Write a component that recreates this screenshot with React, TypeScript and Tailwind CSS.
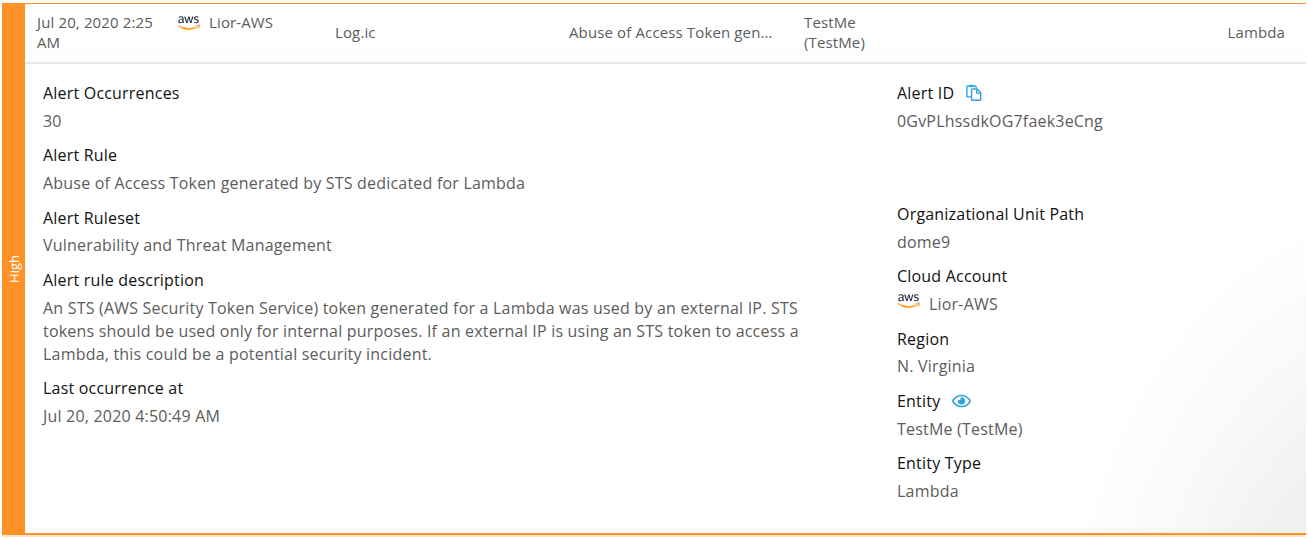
import React from 'react';
import { FaAws, FaRegEye } from 'react-icons/fa';

function AwsLogo({ className = '' }: { className?: string }) {
  return (
    <span className={`relative inline-block h-[18px] w-[23px] shrink-0 ${className}`}>
      <FaAws className="absolute inset-0 h-full w-full text-[#252f3e] [clip-path:inset(0_0_38%_0)]" />
      <FaAws className="absolute inset-0 h-full w-full text-[#ff9e1b] [clip-path:inset(62%_0_0_0)]" stroke="currentColor" strokeWidth="8" />
    </span>
  );
}

function PasteIcon() {
  return (
    <svg viewBox="0 0 16 17" className="h-[17px] w-4 text-[#2fa3df]" fill="none" stroke="currentColor" strokeWidth="1.4" strokeLinejoin="round">
      <path d="M5.4 12.9H1.7a.8.8 0 0 1-.8-.8V2.8a.8.8 0 0 1 .8-.8h7.6a.8.8 0 0 1 .8.8v1.8" />
      <path d="M3.2 2.8V1.6h1.3a1.1 1.1 0 0 1 2.1 0h1.3v1.2z" fill="currentColor" strokeWidth="0.5" />
      <path d="M6.4 5h4.7l3.6 3.6v6.8a.8.8 0 0 1-.8.8H6.4a.8.8 0 0 1-.8-.8V5.8a.8.8 0 0 1 .8-.8z" />
      <path d="M10.7 5.2v3.9h3.9" />
    </svg>
  );
}

function Field({ label, icon, children }: { label: string; icon?: React.ReactNode; children: React.ReactNode }) {
  return (
    <div className="mb-[11.1px]">
      <div className="flex h-[23px] items-center text-[#111]">
        <span>{label}</span>
        {icon && <span className="ml-3 flex">{icon}</span>}
      </div>
      <div className="mt-[5.3px] leading-[23px] text-[#5c5c5c]">{children}</div>
    </div>
  );
}

export default function App() {
  return (
    <div className="h-[539px] w-[1308px] overflow-hidden bg-white pt-[3px] pl-[2px] font-['Open_Sans',sans-serif]">
      <div className="flex h-[532px] w-[1304px]">
        <div className="flex w-[23px] shrink-0 items-center justify-center bg-[#ff9227] text-white">
          <span className="rotate-180 text-[13px] leading-[18px] [writing-mode:vertical-rl]">High</span>
        </div>
        <div className="flex min-w-0 flex-1 flex-col border-t border-b-2 border-[#ff9227]">
          <div className="flex h-[60px] shrink-0 border-b-2 border-[#e6e6e6] bg-linear-to-b from-white from-70% to-[#fcfcfc] text-[15px] leading-[20.4px] tracking-[0.13px] text-[#5c5c5c]">
            <div className="w-[141px] pt-[8px] pr-3 pl-[12px]">Jul 20, 2020 2:25 AM</div>
            <div className="flex w-[169px] items-start pt-[8px] pl-[11px]">
              <AwsLogo className="mt-[2px] mr-[9px]" />
              <span>Lior-AWS</span>
            </div>
            <div className="w-[234px] pt-[18px]">Log.ic</div>
            <div className="w-[234px] pt-[18px] whitespace-nowrap">Abuse of Access Token gen...</div>
            <div className="w-[100px] pt-[8px] pl-px">TestMe (TestMe)</div>
            <div className="ml-auto pt-[18px] pr-[21px]">Lambda</div>
          </div>
          <div className="flex flex-1 bg-[radial-gradient(ellipse_370px_500px_at_1400px_627px,#eff1f1_50%,#f8f9f9_75%,#ffffff_100%)] pt-[17.4px] pl-[18px] text-[16px] tracking-[0.2px]">
            <div className="w-[854px]">
              <Field label="Alert Occurrences">30</Field>
              <Field label="Alert Rule">Abuse of Access Token generated by STS dedicated for Lambda</Field>
              <Field label="Alert Ruleset">Vulnerability and Threat Management</Field>
              <Field label="Alert rule description">
                <div className="w-[775px]">
                  An STS (AWS Security Token Service) token generated for a Lambda was used by an external IP. STS<br />
                  tokens should be used only for internal purposes. If an external IP is using an STS token to access a<br />
                  Lambda, this could be a potential security incident.
                </div>
              </Field>
              <Field label="Last occurrence at">Jul 20, 2020 4:50:49 AM</Field>
            </div>
            <div>
              <div className="h-[121px]">
                <Field label="Alert ID" icon={<PasteIcon />}>0GvPLhssdkOG7faek3eCng</Field>
              </div>
              <Field label="Organizational Unit Path">dome9</Field>
              <Field label="Cloud Account">
                <div className="flex items-start">
                  <AwsLogo className="mt-[-1px] mr-[9px]" />
                  <span>Lior-AWS</span>
                </div>
              </Field>
              <Field label="Region">N. Virginia</Field>
              <Field label="Entity" icon={<FaRegEye className="h-[18px] w-[19px] text-[#2fa3df]" />}>TestMe (TestMe)</Field>
              <Field label="Entity Type">Lambda</Field>
            </div>
          </div>
        </div>
      </div>
      <div className="h-[2px] w-[1304px] bg-[#fbe3cb]" />
    </div>
  );
}
